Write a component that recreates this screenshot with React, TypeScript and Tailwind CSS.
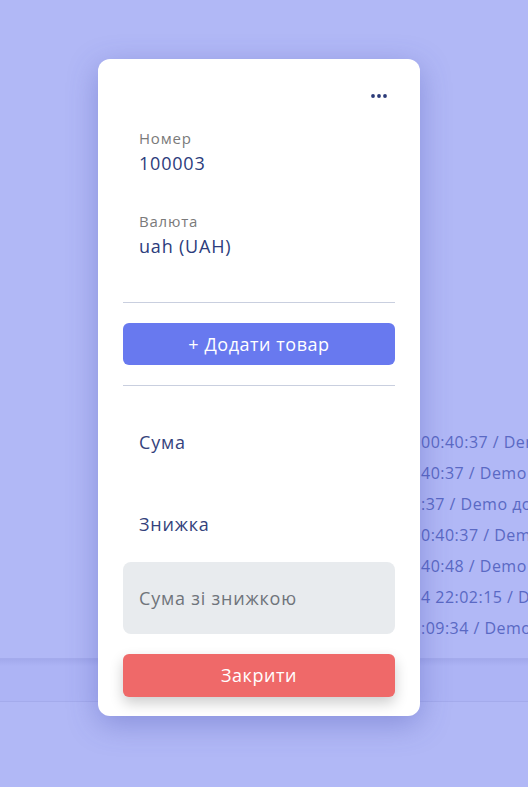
import type { FC } from 'react'

const rows = [
  '00:40:37 / Demo доставка',
  '40:37 / Demo доставка',
  ':37 / Demo доставка',
  '0:40:37 / Demo доставка',
  '40:48 / Demo доставка',
  '4 22:02:15 / Demo доставка',
  ':09:34 / Demo доставка',
]

const DotsIcon: FC = () => (
  <svg width="18" height="6" viewBox="0 0 18 6" fill="#2b3a78">
    <circle cx="3" cy="3" r="1.9" />
    <circle cx="9" cy="3" r="1.9" />
    <circle cx="15" cy="3" r="1.9" />
  </svg>
)

const App: FC = () => {
  return (
    <div
      className="relative min-h-[787px] w-[528px] overflow-hidden bg-[#b1b8f6] tracking-[0.05em]"
      style={{ fontFamily: '"Open Sans", "Noto Sans", sans-serif' }}
    >
      {/* page behind the overlay */}
      <div className="flex flex-col pt-[426px]">
        {rows.map((r, i) => (
          <div
            key={i}
            className="flex h-[31px] items-center whitespace-nowrap pl-[421px] text-[16px] tracking-[0.03em] text-[#5a69c4]"
          >
            {r}
          </div>
        ))}
      </div>
      <div className="mt-[15px] h-[44px] border-t border-b border-[#a4abec] bg-[linear-gradient(#a2a9ec,#adb4f5_7px)]" />

      {/* modal */}
      <div className="absolute left-[98px] top-[59px] flex w-[322px] flex-col rounded-[12px] bg-white px-[25px] pt-[25px] pb-[19px] shadow-[0_8px_30px_rgba(60,70,170,0.35)]">
        <div className="flex h-6 items-center justify-end pr-[7px]">
          <DotsIcon />
        </div>

        <div className="mt-5 pl-4">
          <div className="text-[15px] leading-5 text-[#7a7a7a]">Номер</div>
          <div className="mt-[2px] text-[18px] leading-[26px] text-[#2c3c7c]">100003</div>
          <div className="mt-[35px] text-[15px] leading-5 text-[#7a7a7a]">Валюта</div>
          <div className="mt-[2px] text-[18px] leading-[26px] text-[#2c3c7c]">uah (UAH)</div>
        </div>

        <div className="mt-[43px] h-px bg-[#c9cfdf]" />

        <button
          type="button"
          className="mt-5 h-[42px] rounded-[6px] bg-[#6879ef] text-[18px] font-medium tracking-[0.03em] text-white"
        >
          + Додати товар
        </button>

        <div className="mt-5 h-px bg-[#c9cfdf]" />

        <div className="mt-[43px] pl-4 text-[18px] leading-[26px] text-[#34427c]">Сума</div>
        <div className="mt-[56px] pl-4 text-[18px] leading-[26px] text-[#34427c]">Знижка</div>

        <div className="mt-[25px] flex h-[72px] items-center rounded-[8px] bg-[#e8ebee] pl-4 text-[18px] text-[#6f747b]">
          Сума зі знижкою
        </div>

        <button
          type="button"
          className="mt-5 h-[43px] rounded-[6px] bg-[#ef6969] text-[18px] font-medium tracking-[0.03em] text-white shadow-[0_6px_14px_rgba(0,0,0,0.2)]"
        >
          Закрити
        </button>
      </div>
    </div>
  )
}

export default App
